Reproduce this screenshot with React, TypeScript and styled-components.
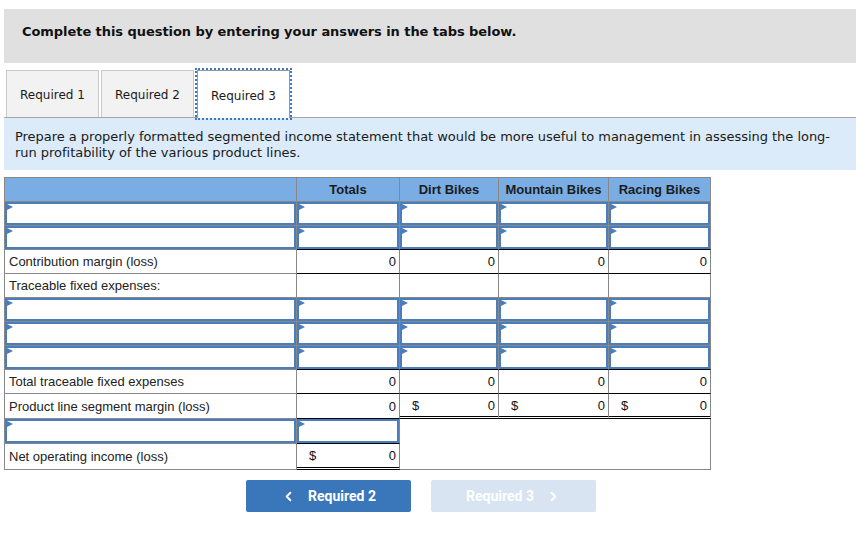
import styled, { createGlobalStyle } from "styled-components";
import { ChevronLeft, ChevronRight } from "lucide-react";

type Edge = "gray" | "black" | "double";

type CellDef =
  | { kind: "input" }
  | { kind: "label"; text: string }
  | { kind: "value"; value?: string; dollar?: boolean }
  | { kind: "blank"; colSpan: number; rowSpan: number };

type RowDef = { cells: CellDef[]; bottoms: Edge[]; height?: number };

const G: Edge = "gray";
const B: Edge = "black";
const D: Edge = "double";

const inputs = (n: number): CellDef[] =>
  Array.from({ length: n }, () => ({ kind: "input" as const }));

const rows: RowDef[] = [
  { cells: inputs(5), bottoms: [G, G, G, G, G] },
  { cells: inputs(5), bottoms: [G, B, B, B, B] },
  {
    cells: [
      { kind: "label", text: "Contribution margin (loss)" },
      { kind: "value", value: "0" },
      { kind: "value", value: "0" },
      { kind: "value", value: "0" },
      { kind: "value", value: "0" },
    ],
    bottoms: [G, B, B, B, B],
  },
  {
    cells: [
      { kind: "label", text: "Traceable fixed expenses:" },
      { kind: "value" },
      { kind: "value" },
      { kind: "value" },
      { kind: "value" },
    ],
    bottoms: [G, G, G, G, G],
  },
  { cells: inputs(5), bottoms: [G, G, G, G, G] },
  { cells: inputs(5), bottoms: [G, G, G, G, G] },
  { cells: inputs(5), bottoms: [G, B, B, B, B] },
  {
    cells: [
      { kind: "label", text: "Total traceable fixed expenses" },
      { kind: "value", value: "0" },
      { kind: "value", value: "0" },
      { kind: "value", value: "0" },
      { kind: "value", value: "0" },
    ],
    bottoms: [G, B, B, B, B],
  },
  {
    cells: [
      { kind: "label", text: "Product line segment margin (loss)" },
      { kind: "value", value: "0" },
      { kind: "value", value: "0", dollar: true },
      { kind: "value", value: "0", dollar: true },
      { kind: "value", value: "0", dollar: true },
    ],
    bottoms: [G, B, D, D, D],
    height: 24,
  },
  {
    cells: [...inputs(2), { kind: "blank", colSpan: 3, rowSpan: 2 }],
    bottoms: [G, B, G],
    height: 24,
  },
  {
    cells: [
      { kind: "label", text: "Net operating income (loss)" },
      { kind: "value", value: "0", dollar: true },
    ],
    bottoms: [G, D],
    height: 25,
  },
];

const columns = ["", "Totals", "Dirt Bikes", "Mountain Bikes", "Racing Bikes"];
const widths = [291, 102, 98, 109, 101];

const GlobalStyle = createGlobalStyle`
  body {
    margin: 0;
    background: #ffffff;
    font-family: "DejaVu Sans", Verdana, sans-serif;
  }
`;

const Page = styled.div`
  width: 852px;
  padding: 9px 0 0 4px;
`;

const Banner = styled.div`
  height: 54px;
  box-sizing: border-box;
  padding: 15px 18px 0;
  background: #e0e0e0;
  font-size: 13px;
  font-weight: bold;
  color: #111;
  letter-spacing: -0.06px;
`;

const TabBar = styled.div`
  display: flex;
  gap: 2px;
  margin-top: 7px;
  padding-left: 2px;
  border-bottom: 1px solid #a6a6a6;
`;

const Tab = styled.div<{ $active?: boolean }>`
  width: 93px;
  box-sizing: border-box;
  display: flex;
  align-items: center;
  justify-content: center;
  font-size: 12px;
  color: #1a1a1a;
  background: ${(p) => (p.$active ? "#ffffff" : "#f2f2f2")};
  border: 1px solid ${(p) => (p.$active ? "#999999" : "#c9c9c9")};
  border-bottom: none;
  margin-left: ${(p) => (p.$active ? "1px" : "0")};
  outline: ${(p) => (p.$active ? "2px dotted #3b78c0" : "none")};
  margin-bottom: ${(p) => (p.$active ? "-1px" : "0")};
  height: ${(p) => (p.$active ? "48px" : "47px")};
  padding-top: 2px;
`;

const Prompt = styled.div`
  background: #dbebf9;
  padding: 11px 11px 9px;
  font-size: 13px;
  line-height: 16px;
  color: #1a1a1a;
  letter-spacing: -0.03px;
`;

const Sheet = styled.table`
  margin-top: 7px;
  border-collapse: separate;
  border-spacing: 0;
  border-top: 1px solid #888888;
  border-left: 1px solid #888888;
  font-family: "Liberation Sans", Arial, sans-serif;
  font-size: 13px;
  color: #111;
`;

const HeadCell = styled.th<{ $w: number }>`
  width: ${(p) => p.$w}px;
  height: 23px;
  padding: 0;
  background: #7aade3;
  border-right: 1px solid #888888;
  border-bottom: 1px solid #888888;
  font-size: 13px;
  font-weight: bold;
  color: #1c1c1c;
  text-align: center;
  vertical-align: middle;
`;

const edgeCss = (e: Edge) =>
  e === "double"
    ? "3px double #000000"
    : e === "black"
    ? "1px solid #000000"
    : "1px solid #888888";

const Cell = styled.td<{ $bottom: Edge; $h: number }>`
  height: ${(p) => (p.$bottom === "double" ? p.$h - 2 : p.$h)}px;
  padding: 0;
  border-right: 1px solid #888888;
  border-bottom: ${(p) => edgeCss(p.$bottom)};
  vertical-align: middle;
`;

const LabelText = styled.div`
  padding-left: 4px;
  color: #222;
`;

const ValueBox = styled.div`
  display: flex;
  justify-content: space-between;
  padding: 0 3px 0 12px;
`;

const InputBox = styled.div<{ $h: number }>`
  position: relative;
  height: ${(p) => p.$h}px;
  box-sizing: border-box;
  border: 2px solid #4a7dbb;
  background: #ffffff;
`;

const Marker = styled.span`
  position: absolute;
  top: 0;
  left: 0;
  width: 0;
  height: 0;
  border-left: 6px solid #4a7dbb;
  border-top: 3px solid transparent;
  border-bottom: 3px solid transparent;
`;

const Nav = styled.div`
  display: flex;
  gap: 20px;
  margin-top: 10px;
  padding-left: 242px;
`;

const NavButton = styled.button<{ $disabled?: boolean }>`
  width: 165px;
  height: 32px;
  display: flex;
  align-items: center;
  justify-content: center;
  gap: 12px;
  border: none;
  border-radius: 2px;
  background: ${(p) => (p.$disabled ? "#d8e4f1" : "#3a76ba")};
  color: #ffffff;
  font-family: Roboto, "Liberation Sans", sans-serif;
  font-size: 14px;
  font-weight: bold;
  cursor: ${(p) => (p.$disabled ? "default" : "pointer")};
`;

const renderCell = (cell: CellDef, bottom: Edge, h: number, key: number) => {
  if (cell.kind === "blank") {
    return (
      <Cell
        key={key}
        $bottom={bottom}
        $h={h}
        colSpan={cell.colSpan}
        rowSpan={cell.rowSpan}
      />
    );
  }
  if (cell.kind === "input") {
    return (
      <Cell key={key} $bottom={bottom} $h={h}>
        <InputBox $h={h}>
          <Marker />
        </InputBox>
      </Cell>
    );
  }
  if (cell.kind === "label") {
    return (
      <Cell key={key} $bottom={bottom} $h={h}>
        <LabelText>{cell.text}</LabelText>
      </Cell>
    );
  }
  return (
    <Cell key={key} $bottom={bottom} $h={h}>
      <ValueBox>
        <span>{cell.dollar ? "$" : ""}</span>
        <span>{cell.value ?? ""}</span>
      </ValueBox>
    </Cell>
  );
};

export default function App() {
  return (
    <Page>
      <GlobalStyle />
      <Banner>Complete this question by entering your answers in the tabs below.</Banner>

      <TabBar>
        <Tab>Required 1</Tab>
        <Tab>Required 2</Tab>
        <Tab $active>Required 3</Tab>
      </TabBar>

      <Prompt>
        Prepare a properly formatted segmented income statement that would be more useful to
        management in assessing the long-run profitability of the various product lines.
      </Prompt>

      <Sheet>
        <thead>
          <tr>
            {columns.map((c, i) => (
              <HeadCell key={i} $w={widths[i]}>
                {c}
              </HeadCell>
            ))}
          </tr>
        </thead>
        <tbody>
          {rows.map((row, r) => (
            <tr key={r}>
              {row.cells.map((cell, c) => renderCell(cell, row.bottoms[c], row.height ?? 23, c))}
            </tr>
          ))}
        </tbody>
      </Sheet>

      <Nav>
        <NavButton>
          <ChevronLeft size={15} strokeWidth={3} />
          Required 2
        </NavButton>
        <NavButton $disabled>
          Required 3
          <ChevronRight size={15} strokeWidth={3} />
        </NavButton>
      </Nav>
    </Page>
  );
}
